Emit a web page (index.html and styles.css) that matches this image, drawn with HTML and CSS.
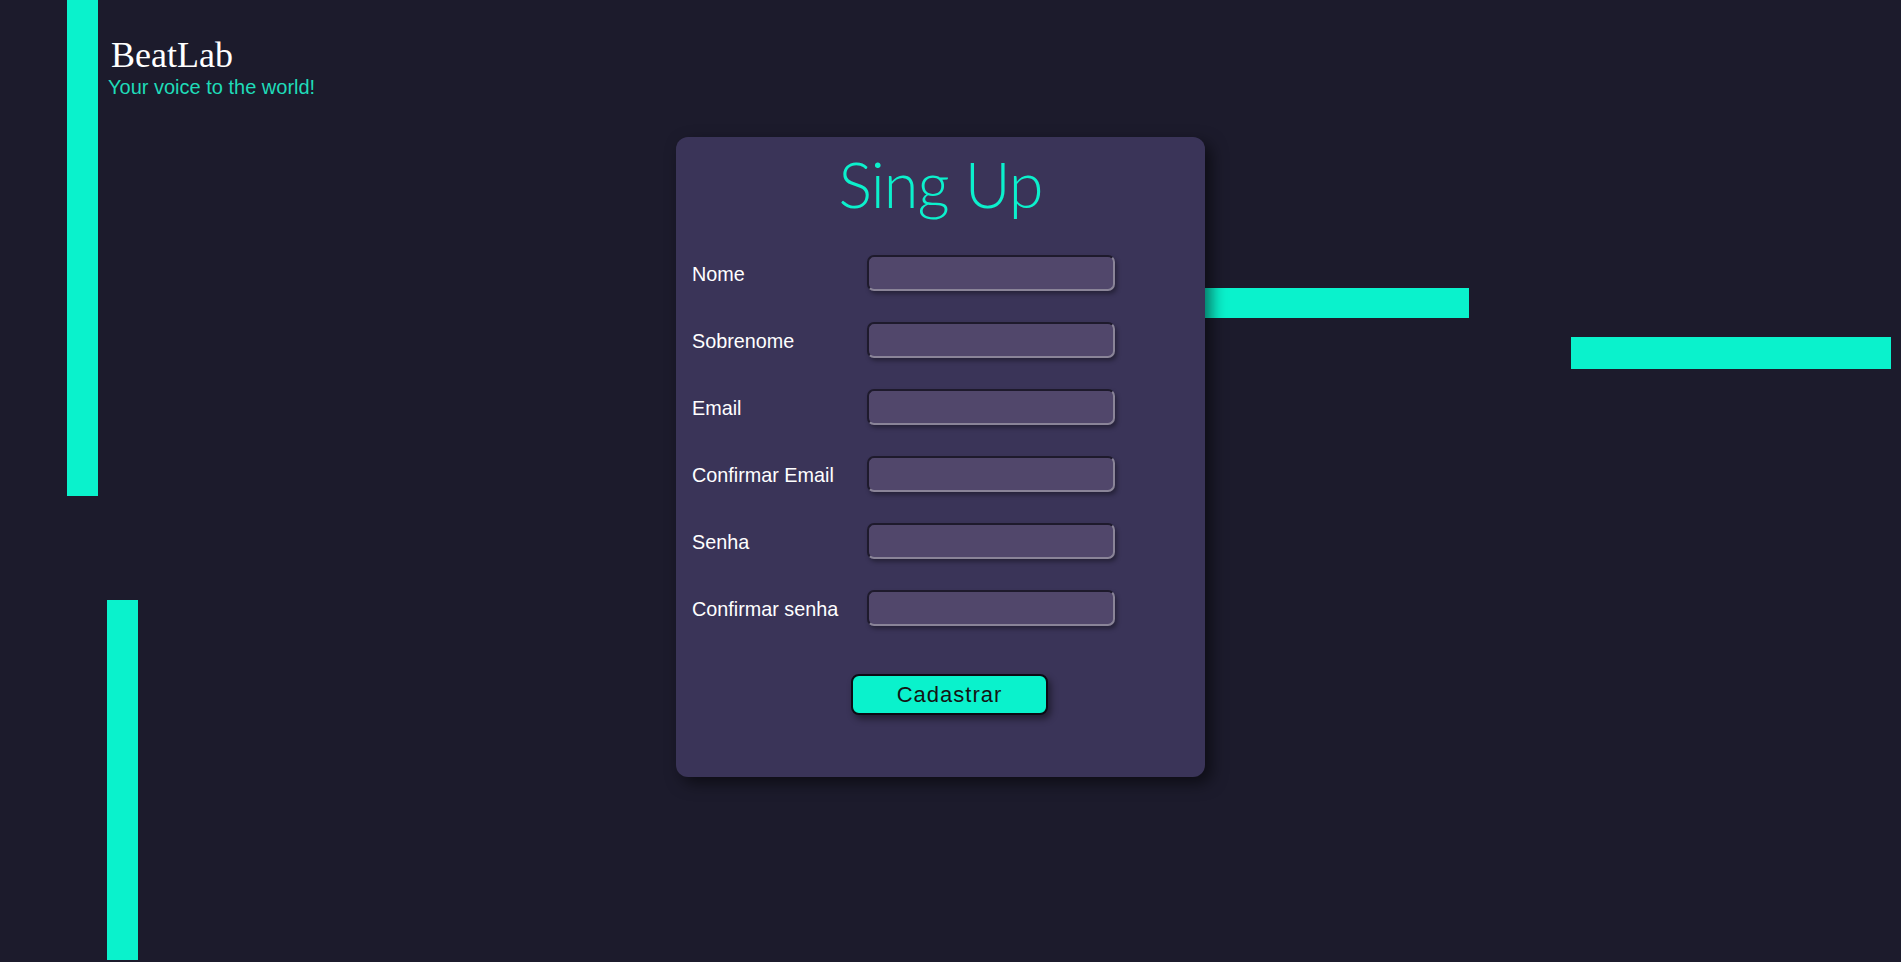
FILE: index.html
```html
<!DOCTYPE html>
<html lang="pt">
<head>
<meta charset="utf-8">
<title>BeatLab - Sing Up</title>
<link rel="stylesheet" href="styles.css">
</head>
<body>
  <div class="deco deco-left-top"></div>
  <div class="deco deco-left-bottom"></div>
  <div class="deco deco-right-a"></div>
  <div class="deco deco-right-b"></div>

  <header class="brand">
    <h1 class="brand-name">BeatLab</h1>
    <p class="brand-tagline">Your voice to the world!</p>
  </header>

  <main class="main">
    <section class="card">
      <h2 class="card-title">Sing Up</h2>
      <form class="form">
        <label class="form-label" for="nome">Nome</label>
        <input class="form-input" id="nome" type="text">
        <label class="form-label" for="sobrenome">Sobrenome</label>
        <input class="form-input" id="sobrenome" type="text">
        <label class="form-label" for="email">Email</label>
        <input class="form-input" id="email" type="email">
        <label class="form-label" for="cemail">Confirmar Email</label>
        <input class="form-input" id="cemail" type="email">
        <label class="form-label" for="senha">Senha</label>
        <input class="form-input" id="senha" type="password">
        <label class="form-label" for="csenha">Confirmar senha</label>
        <input class="form-input" id="csenha" type="password">
      </form>
      <div class="actions">
        <button class="btn" type="button">Cadastrar</button>
      </div>
    </section>
  </main>
</body>
</html>
```
FILE: styles.css
```css
html, body {
  margin: 0;
  padding: 0;
}

body {
  background: #1c1b2c;
  min-height: 962px;
  font-family: "Liberation Sans", Arial, sans-serif;
  position: relative;
  overflow: hidden;
}

.deco {
  position: absolute;
  background: #0af2cc;
  z-index: 0;
}

.deco-left-top {
  left: 67px;
  top: 0;
  width: 31px;
  height: 496px;
}

.deco-left-bottom {
  left: 107px;
  top: 600px;
  width: 31px;
  height: 360px;
}

.deco-right-a {
  left: 1180px;
  top: 288px;
  width: 289px;
  height: 30px;
}

.deco-right-b {
  left: 1571px;
  top: 337px;
  width: 320px;
  height: 32px;
}

.brand {
  position: relative;
  z-index: 1;
  padding: 33px 0 0 108px;
  height: 107px;
  box-sizing: border-box;
}

.brand-name {
  margin: 0 0 0 3px;
  font-family: "Liberation Serif", "Times New Roman", serif;
  font-weight: 400;
  font-size: 36px;
  line-height: 44px;
  color: #ffffff;
}

.brand-tagline {
  margin: -2px 0 0 0;
  font-size: 20px;
  line-height: 24px;
  color: #1fdcb9;
}

.main {
  position: relative;
  z-index: 1;
  display: flex;
  justify-content: center;
  padding: 30px 20px 0 0;
}

.card {
  width: 529px;
  height: 640px;
  box-sizing: border-box;
  background: #3a3458;
  border-radius: 12px;
  box-shadow: 6px 6px 16px rgba(0, 0, 0, 0.55);
  padding: 10px 16px 0 16px;
}

.card-title {
  margin: 0;
  text-align: center;
  font-family: Lato, "Open Sans", sans-serif;
  font-weight: 300;
  font-size: 63px;
  line-height: 72px;
  padding-top: 1px;
  height: 71px;
  letter-spacing: -1px;
  color: #0cf0cc;
}

.form {
  display: grid;
  grid-template-columns: 175px 248px;
  row-gap: 31px;
  margin-top: 36px;
}

.form-label {
  align-self: center;
  color: #ffffff;
  font-size: 19.8px;
  line-height: 24px;
  padding-top: 2px;
}

.form-input {
  width: 248px;
  height: 36px;
  box-sizing: border-box;
  margin: 0;
  background: #51476b;
  border: 2px solid;
  border-color: #1e1a2c #8a8498 #8a8498 #1e1a2c;
  border-radius: 7px;
  box-shadow: 2px 3px 4px rgba(0, 0, 0, 0.35);
  color: #ffffff;
  outline: none;
}

.actions {
  padding: 48px 0 0 159px;
}

.btn {
  width: 197px;
  height: 41px;
  box-sizing: border-box;
  background: #0af2cc;
  border: 2px solid #0b0b14;
  border-radius: 8px;
  box-shadow: 3px 4px 7px rgba(0, 0, 0, 0.45);
  font-family: "Liberation Sans", Arial, sans-serif;
  font-size: 22px;
  letter-spacing: 1px;
  color: #141414;
  padding: 0;
  cursor: pointer;
}
```
